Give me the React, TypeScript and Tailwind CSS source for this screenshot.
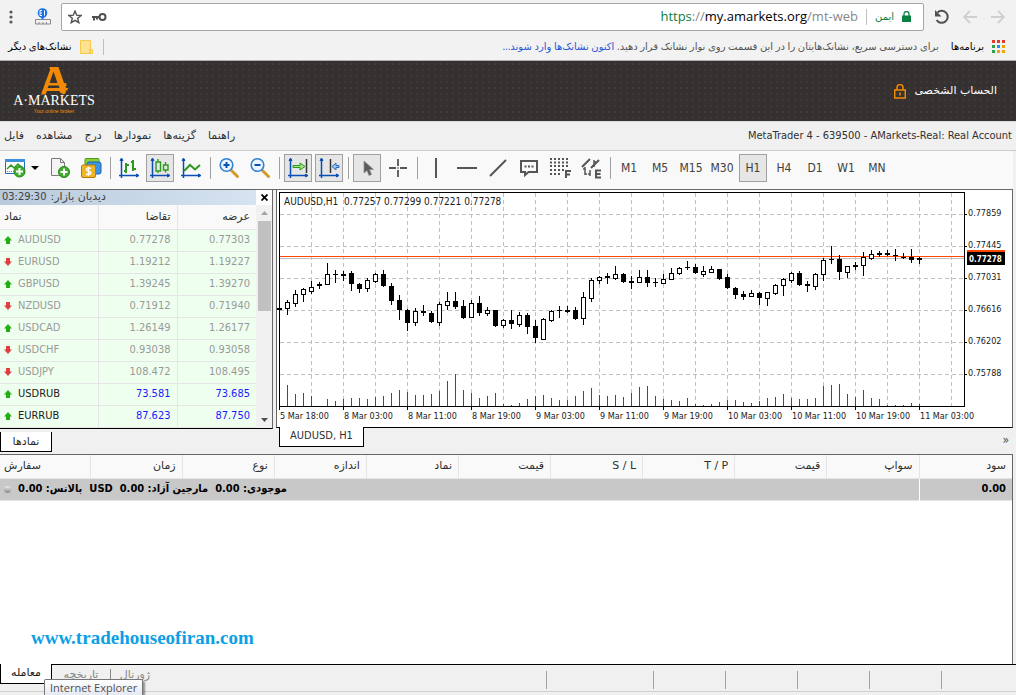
import type { ReactNode } from 'react';
import clsx from 'clsx';

type Candle = [high: number, top: number, bottom: number, low: number, hollow: 0 | 1];

const CANDLES: Candle[] = [
  [118, 118, 120, 120, 0], [110, 112, 118, 124, 1], [100, 104, 113, 116, 1], [98, 99, 104, 111, 1],
  [91, 97, 101, 103, 1], [92, 94, 96, 98, 0], [73, 84, 94, 94, 1], [80, 84, 85, 92, 0],
  [81, 84, 86, 90, 0], [81, 83, 94, 100, 0], [93, 94, 99, 102, 0], [88, 90, 98, 101, 1],
  [83, 84, 91, 92, 1], [80, 84, 96, 96, 0], [93, 96, 111, 114, 0], [105, 110, 120, 129, 0],
  [119, 120, 133, 140, 0], [118, 121, 132, 135, 1], [115, 121, 123, 125, 0], [121, 123, 132, 132, 0],
  [112, 114, 132, 135, 1], [102, 111, 115, 119, 1], [102, 111, 117, 118, 0], [110, 116, 128, 128, 0],
  [110, 113, 127, 127, 1], [106, 113, 123, 125, 0], [117, 120, 123, 125, 1], [120, 120, 136, 136, 0],
  [129, 130, 135, 137, 1], [120, 130, 134, 138, 0], [122, 125, 134, 136, 1], [123, 125, 137, 143, 0],
  [130, 136, 148, 152, 0], [128, 129, 149, 149, 1], [120, 121, 130, 131, 1], [116, 120, 121, 127, 0],
  [116, 120, 122, 122, 0], [117, 120, 129, 129, 0], [102, 107, 128, 134, 1], [88, 90, 108, 111, 1],
  [86, 87, 90, 93, 1], [83, 86, 88, 93, 0], [76, 84, 88, 89, 1], [83, 84, 92, 92, 0],
  [86, 91, 93, 98, 0], [80, 87, 92, 92, 1], [80, 87, 93, 96, 0], [88, 92, 93, 96, 0],
  [84, 89, 93, 93, 1], [78, 83, 89, 89, 1], [77, 78, 83, 84, 1], [71, 77, 78, 79, 0],
  [74, 77, 83, 83, 0], [76, 81, 84, 86, 1], [76, 79, 82, 82, 1], [79, 79, 89, 89, 0],
  [84, 87, 98, 98, 0], [97, 98, 105, 108, 0], [101, 104, 107, 109, 0], [100, 103, 106, 106, 1],
  [102, 103, 108, 114, 0], [102, 102, 108, 115, 1], [94, 95, 103, 104, 1], [88, 89, 95, 105, 1],
  [82, 83, 90, 92, 1], [81, 83, 95, 95, 0], [91, 94, 96, 101, 0], [83, 84, 96, 99, 1],
  [68, 70, 84, 90, 1], [56, 69, 70, 73, 0], [65, 69, 82, 89, 0], [76, 76, 82, 87, 1],
  [72, 75, 77, 79, 0], [62, 67, 75, 85, 1], [60, 64, 68, 69, 1], [61, 63, 65, 66, 0],
  [60, 63, 65, 65, 0], [59, 65, 66, 70, 0], [63, 67, 68, 68, 0], [59, 67, 70, 72, 0],
  [67, 68, 70, 73, 0],
];

const VOLUMES = [
  0, 21, 12, 13, 10, 0, 7, 5, 7, 8, 8, 7, 9, 10, 13, 16, 14, 11, 11, 12, 15, 25, 32, 16, 13, 8, 10,
  13, 2, 1, 3, 7, 10, 11, 8, 6, 6, 10, 15, 18, 11, 10, 11, 9, 13, 19, 20, 10, 7, 6, 5, 8, 2, 1, 2,
  4, 6, 6, 4, 3, 5, 8, 9, 12, 8, 7, 7, 8, 20, 21, 22, 12, 9, 16, 8, 7, 1, 1, 1, 3, 2,
];

const PRICES = ['0.77859', '0.77445', '0.77031', '0.76616', '0.76202', '0.75788'];

const TIMES = [
  '5 Mar 18:00', '8 Mar 03:00', '8 Mar 11:00', '8 Mar 19:00', '9 Mar 03:00', '9 Mar 11:00',
  '9 Mar 19:00', '10 Mar 03:00', '10 Mar 11:00', '10 Mar 19:00', '11 Mar 03:00',
];

const QUOTES = [
  { symbol: 'AUDUSD', bid: '0.77278', ask: '0.77303', up: true, live: false },
  { symbol: 'EURUSD', bid: '1.19212', ask: '1.19227', up: false, live: false },
  { symbol: 'GBPUSD', bid: '1.39245', ask: '1.39270', up: true, live: false },
  { symbol: 'NZDUSD', bid: '0.71912', ask: '0.71940', up: false, live: false },
  { symbol: 'USDCAD', bid: '1.26149', ask: '1.26177', up: true, live: false },
  { symbol: 'USDCHF', bid: '0.93038', ask: '0.93058', up: false, live: false },
  { symbol: 'USDJPY', bid: '108.472', ask: '108.495', up: false, live: false },
  { symbol: 'USDRUB', bid: '73.581', ask: '73.685', up: true, live: true },
  { symbol: 'EURRUB', bid: '87.623', ask: '87.750', up: true, live: true },
];

const MENU = ['فایل', 'مشاهده', 'درج', 'نمودارها', 'گزینه‌ها', 'راهنما'];
const TIMEFRAMES = ['M1', 'M5', 'M15', 'M30', 'H1', 'H4', 'D1', 'W1', 'MN'];
const ORDER_COLUMNS = ['سفارش', 'زمان', 'نوع', 'اندازه', 'نماد', 'قیمت', 'S / L', 'T / P', 'قیمت', 'سواپ', 'سود'];

// the condensed face is too narrow for Persian, so those labels use the regular one
const PERSIAN = "[font-family:'DejaVu_Sans',sans-serif]";

function Axes() {
  return (
    <g stroke="#0a4fb4" strokeWidth="1.5" fill="#0a4fb4">
      <path d="M2.5 3v17M0 17.5h18" fill="none" />
      <path d="M2.5 0l1.5 2.5h-3zM20 17.5l-2.5 1.5v-3z" strokeWidth="1" />
    </g>
  );
}

function Icon({ children }: { children: ReactNode }) {
  return (
    <svg width="20" height="20" viewBox="0 0 20 20" fill="none" aria-hidden="true" className="overflow-visible">
      {children}
    </svg>
  );
}

function PlusBadge({ x, y }: { x: number; y: number }) {
  return (
    <g>
      <circle cx={x} cy={y} r="5.5" fill="#3fae29" stroke="#23871a" />
      <path d={`M${x - 3.5} ${y}h7M${x} ${y - 3.5}v7`} stroke="#fff" strokeWidth="2" />
    </g>
  );
}

function ToolButton({ label, active, children }: { label: string; active?: boolean; children: ReactNode }) {
  return (
    <button
      type="button"
      aria-label={label}
      aria-pressed={active}
      className={clsx(
        'flex h-7 w-7 shrink-0 items-center justify-center text-xs text-[#404040]',
        active && 'border border-[#a0a0a0] bg-[#e6e6e6]',
      )}
    >
      {children}
    </button>
  );
}

function Separator() {
  return (
    <span className="flex w-1 shrink-0 justify-center">
      <span className="h-[22px] w-px bg-[#a0a0a0]" />
    </span>
  );
}

function BrowserBar() {
  return (
    <div className="border-b border-[#b0b0b0] bg-[#f2f2f2] [font-family:'Open_Sans','DejaVu_Sans',sans-serif]">
      <div className="flex h-[33px] items-center">
        <button type="button" aria-label="Menu" className="flex w-[22px] justify-center">
          <svg width="4" height="14" viewBox="0 0 4 14" fill="#5a5a5a">
            <circle cx="2" cy="2" r="1.6" />
            <circle cx="2" cy="7" r="1.6" />
            <circle cx="2" cy="12" r="1.6" />
          </svg>
        </button>
        <button type="button" aria-label="Extension" className="ml-3 w-[27px]">
          <svg width="18" height="18" viewBox="0 0 18 18" fill="none">
            <path d="M1.500 11.500h15v4.500h-15zM5 16v-2M9 16v-2M12.500 16v-2" stroke="#8a8a8a" />
            <path d="M6 8h5l-2.500 4z" fill="#1a73e8" />
            <circle cx="8.500" cy="5" r="4.800" fill="#1a73e8" />
            <path d="M8 2.500H6v5h2M6 5h2M10.500 2.500v5" stroke="#fff" />
          </svg>
        </button>
        <div className="flex h-7 flex-1 items-center rounded-xs border border-[#a6a6a6] bg-white px-1.5">
          <button type="button" aria-label="Bookmark">
            <svg width="14" height="14" viewBox="0 0 14 14" fill="none" stroke="#505050" strokeWidth="1.400">
              <path d="M7 1l1.700 4.200 4.400.3-3.400 2.800 1.100 4.400L7 10.300l-3.800 2.400 1.100-4.400L.9 5.500l4.400-.3z" />
            </svg>
          </button>
          <button type="button" aria-label="Saved password" className="ml-2.5">
            <svg width="15" height="10" viewBox="0 0 15 10" fill="none" stroke="#505050">
              <circle cx="10.500" cy="5" r="3" strokeWidth="2" />
              <path d="M0 5h7.500M2 5v3.500M5 5v2.500" strokeWidth="2" />
            </svg>
          </button>
          <span className="ml-auto text-[13px] text-[#888]">
            <span className="text-[#0b8043]">https</span>://<span className="text-black">my.amarkets.org</span>/mt-web
          </span>
          <span className="ml-2 h-4 w-px bg-[#c0c0c0]" />
          <span className="ml-2 text-[10px] text-[#0b8043]">ایمن</span>
          <svg className="mr-1.5 ml-2" width="9" height="11" viewBox="0 0 9 11" fill="none">
            <path d="M2 5V3a2.500 2.500 0 015 0v2" stroke="#0b8043" strokeWidth="1.300" />
            <path d="M0 4.500h9V11H0z" fill="#0b8043" />
          </svg>
        </div>
        <button type="button" aria-label="Reload" className="ml-2.5">
          <svg width="16" height="16" viewBox="0 0 16 16" fill="none">
            <path d="M3.500 3.500A6 6 0 112.600 11" stroke="#505050" strokeWidth="2" />
            <path d="M1 1v6.500h6.500z" fill="#505050" />
          </svg>
        </button>
        <button type="button" aria-label="Back" className="ml-3">
          <svg width="16" height="14" viewBox="0 0 16 14" fill="none" stroke="#d0d0d0" strokeWidth="1.800">
            <path d="M15 7H2M8 1L2 7l6 6" />
          </svg>
        </button>
        <button type="button" aria-label="Forward" className="mr-2.5 ml-3">
          <svg width="16" height="14" viewBox="0 0 16 14" fill="none" stroke="#d0d0d0" strokeWidth="1.800">
            <path d="M1 7h13M8 1l6 6-6 6" />
          </svg>
        </button>
      </div>

      <div dir="rtl" className="flex h-[27px] items-center pr-2.5 pl-2 text-[10px] whitespace-nowrap text-[#555]">
        <svg width="14" height="14" viewBox="0 0 14 14" className="shrink-0">
          <path d="M0 0h3v3H0zM5 0h3v3H5zM10 0h3v3h-3z" fill="#e33b2e" />
          <path d="M0 5h3v3H0zM0 10h3v3H0z" fill="#2e9e4f" />
          <path d="M5 5h3v3H5z" fill="#2a8be6" />
          <path d="M10 5h3v3h-3zM5 10h3v3H5zM10 10h3v3h-3z" fill="#f2a30c" />
        </svg>
        <a href="#apps" className="mr-2 text-black">برنامه‌ها</a>
        <span className="mr-3">
          برای دسترسی سریع، نشانک‌هایتان را در این قسمت روی نوار نشانک قرار دهید.{' '}
          <a href="#import" className="text-[#2a56d6]">اکنون نشانک‌ها وارد شوند...</a>
        </span>
        <span className="mr-auto h-4 w-px bg-[#c0c0c0]" />
        <svg width="13" height="14" viewBox="0 0 13 14" className="mr-2.5" fill="#fde293" stroke="#f5cc4a">
          <path d="M.5.5h10v13H.5zM9.500 9.500h3v4h-3z" />
        </svg>
        <a href="#other" className="mr-2 text-black">نشانک‌های دیگر</a>
      </div>
    </div>
  );
}

function SiteHeader() {
  return (
    <header className="flex h-[61px] items-center justify-between border-b border-[#dcdcdc] bg-[#353130] bg-[radial-gradient(#3f3a39_1px,transparent_1px)] bg-[length:6px_6px] pr-[19px] pl-3.5">
      <a href="#home" className="flex w-20 flex-col items-center">
        <svg width="27" height="28" viewBox="0 0 27 28" fill="#f28a05" aria-hidden="true">
          <path
            fillRule="evenodd"
            d="M8.500 0h9l5.500 16h2l.8 2.500-1.300.5.700 2H27l-.5 2.500h-2l.5 2-2 2-4-2-.5-1.500H6l-1.500 3.500H0L9 3zM12.500 4.500l-4 11.500h8zM7.500 18.500l-.8 2.500h11.800l-.8-2.500z"
          />
        </svg>
        <span className="text-sm leading-3 whitespace-nowrap text-white [font-family:'Liberation_Serif',serif]">
          A·MARKETS
        </span>
        <span className="text-[5px] leading-2 whitespace-nowrap text-[#f28a05] [font-family:'Liberation_Sans',sans-serif]">
          Your online broker
        </span>
      </a>
      <a href="#account" className="flex items-center gap-2 text-[11px] text-white">
        <svg width="12" height="15" viewBox="0 0 12 15" fill="none" stroke="#f28a05" strokeWidth="1.500">
          <path d="M3 6V3.500a3 3 0 016 0V6M.7 6h10.600v8H.7zM6 8.500v3" />
        </svg>
        <span dir="rtl" className={PERSIAN}>الحساب الشخصی</span>
      </a>
    </header>
  );
}

function MenuBar() {
  return (
    <div className="flex h-[29px] items-center justify-between border-b border-[#ccc] px-1 text-[11px] text-[#303030]">
      <nav className={clsx('flex gap-3', PERSIAN)}>
        {MENU.map((item) => (
          <button key={item} type="button">{item}</button>
        ))}
      </nav>
      <span>MetaTrader 4 - 639500 - AMarkets-Real: Real Account</span>
    </div>
  );
}

function Toolbar() {
  return (
    <div className="flex h-[38px] items-center gap-[3px] overflow-hidden bg-[#f9f9f9] px-[5px] pb-1">
      <button type="button" aria-label="New chart" className="flex w-[38px] shrink-0 items-center gap-1.5">
        <Icon>
          <path d="M.5 1.500h19v14H.5z" fill="#fff" stroke="#1f6fc0" />
          <path d="M0 1h20v3H0z" fill="#3c8ede" />
          <path d="M2 11l4-4 3 3 4-4 5 5" stroke="#2c9a1f" strokeWidth="1.500" />
          <path d="M2 13.500h12" stroke="#5a90d0" strokeDasharray="1 1" />
          <PlusBadge x={14.5} y={13.5} />
        </Icon>
        <svg width="8" height="4" viewBox="0 0 8 4" className="shrink-0"><path d="M0 0h8L4 4z" fill="#000" /></svg>
      </button>
      <ToolButton label="New order">
        <Icon>
          <path d="M1.500.5h9l4 4v13h-13z" fill="#f4f4f4" stroke="#7a7a7a" />
          <path d="M10.500.5v4h4" stroke="#7a7a7a" />
          <PlusBadge x={14} y={14} />
        </Icon>
      </ToolButton>
      <ToolButton label="Account history">
        <Icon>
          <rect x="4" y=".5" width="14" height="8" rx="1" fill="#8ccf3a" stroke="#4c9a1c" />
          <rect x="6" y="4" width="14" height="12" rx="2" fill="#3b94e4" stroke="#1d62ae" />
          <rect x=".5" y="7" width="14" height="12.500" rx="1.500" fill="#f0b429" stroke="#b87a08" />
          <path d="M10 10.500C9 9.500 5.300 9.500 5.300 11.500S10 13 10 15s-4 2-5 .7M7.500 8.800v9" stroke="#fff" strokeWidth="1.400" />
        </Icon>
      </ToolButton>
      <Separator />
      <ToolButton label="Bar chart">
        <Icon>
          <Axes />
          <path d="M7 5v10M5 13h2M7 7h3M14 2v11M12 4h2M14 11h3" stroke="#2c9a1f" strokeWidth="2" />
        </Icon>
      </ToolButton>
      <ToolButton label="Candlesticks" active>
        <Icon>
          <Axes />
          <path d="M8 1v3M8 13v2M6 4h4.500v9H6zM15.500 4v3M15.500 12v2.500M13.500 7H18v5h-4.500z" stroke="#2c9a1f" strokeWidth="1.400" />
        </Icon>
      </ToolButton>
      <ToolButton label="Line chart">
        <Icon>
          <Axes />
          <path d="M3 13l6-6 5 4.500 5-4.500" stroke="#2c9a1f" strokeWidth="2" />
        </Icon>
      </ToolButton>
      <Separator />
      {['Zoom in', 'Zoom out'].map((label) => (
        <ToolButton key={label} label={label}>
          <Icon>
            <path d="M12.500 12.500l6 6" stroke="#d49a2b" strokeWidth="3" strokeLinecap="round" />
            <circle cx="7.500" cy="7" r="6.300" fill="#eaf5ff" stroke="#2f83cf" strokeWidth="1.600" />
            <path d={label === 'Zoom in' ? 'M4.500 7h6M7.500 4v6' : 'M4.500 7h6'} stroke="#0a4fb4" strokeWidth="2" />
          </Icon>
        </ToolButton>
      ))}
      <Separator />
      <ToolButton label="Auto scroll" active>
        <Icon>
          <Axes />
          <path d="M18.500 1v14" stroke="#333" strokeWidth="1.500" />
          <path d="M5 7.500h7V5l5 3.500-5 3.500V9.500H5z" fill="#a6e287" stroke="#2c9a1f" />
        </Icon>
      </ToolButton>
      <ToolButton label="Chart shift" active>
        <Icon>
          <Axes />
          <path d="M11.500 1v14" stroke="#333" strokeWidth="1.500" />
          <path d="M20 7.500h-3V5l-4 3.500 4 3.500V9.500h3z" fill="#9cc8f5" stroke="#2468c0" />
        </Icon>
      </ToolButton>
      <Separator />
      <ToolButton label="Cursor" active>
        <Icon>
          <path d="M7 3v12l3-2.500 2 5 2.500-1-2-5h4z" fill="#5c5c5c" stroke="#8c8c8c" strokeWidth=".7" />
        </Icon>
      </ToolButton>
      <ToolButton label="Crosshair">
        <Icon>
          <path d="M1 10h7M12 10h7M10 1v7M10 12v7M9.500 10h1" stroke="#555" strokeWidth="1.800" />
        </Icon>
      </ToolButton>
      <Separator />
      <ToolButton label="Vertical line">
        <Icon><path d="M10 0v20" stroke="#555" strokeWidth="2" /></Icon>
      </ToolButton>
      <ToolButton label="Horizontal line">
        <Icon><path d="M0 10h20" stroke="#555" strokeWidth="2" /></Icon>
      </ToolButton>
      <ToolButton label="Trendline">
        <Icon><path d="M2 18L18 2" stroke="#555" strokeWidth="2" /></Icon>
      </ToolButton>
      <ToolButton label="Text">
        <Icon>
          <path d="M2 3h16v11H9.500L6 17v-3H2z" stroke="#555" strokeWidth="2" />
          <path d="M5.500 8.500h2M9 8.500h2M12.500 8.500h2" stroke="#555" strokeWidth="2" />
        </Icon>
      </ToolButton>
      <ToolButton label="Fibonacci">
        <Icon>
          <path d="M0 1h19M0 4.500h19M0 8h19M0 12h19M0 16h12" stroke="#555" strokeWidth="2" strokeDasharray="2 2" />
          <path d="M14 10h6v10h-6z" fill="#f9f9f9" />
          <path d="M16 20v-7h5M16 16.500h4" stroke="#555" strokeWidth="2" />
        </Icon>
      </ToolButton>
      <ToolButton label="Equidistant channel">
        <Icon>
          <path d="M1 9l8-8M10 10l8-8" stroke="#555" strokeWidth="2" />
          <path d="M4 9v8M2 11h2M4 16h2M9 12v6M7 16h2M13 2v7M11 8h2M13 4h2" stroke="#555" strokeWidth="1.500" />
          <path d="M20 12.500h-5v7h5M15 16h4.500" stroke="#555" strokeWidth="2" />
        </Icon>
      </ToolButton>
      <Separator />
      {TIMEFRAMES.map((frame) => (
        <ToolButton key={frame} label={frame} active={frame === 'H1'}>{frame}</ToolButton>
      ))}
    </div>
  );
}

function MarketWatch() {
  return (
    <section className="flex w-[273px] shrink-0 flex-col">
      <div className="flex-1 border-r border-b border-r-[#666] border-b-black bg-[#f9f9f9]">
        <div className="flex h-[15px] items-center bg-white">
          <h2 className="flex h-full flex-1 items-center bg-linear-to-r from-[#b8cadc] to-[#d6e3f1] pl-0.5 text-[11px] text-[#404040]">
            03:29:30<span dir="rtl" className={clsx('pl-1', PERSIAN)}>دیدبان بازار:</span>
          </h2>
          <button type="button" aria-label="Close" className="flex w-4 justify-center">
            <svg width="7" height="7" viewBox="0 0 7 7" stroke="#000" strokeWidth="1.800"><path d="M.5.5l6 6M6.500.5l-6 6" /></svg>
          </button>
        </div>
        <div className="flex">
          <table className="flex-1 table-fixed border-collapse text-[11px]">
            <thead>
              <tr className={clsx('h-6 border-b border-[#e5e5e5] text-[#303030]', PERSIAN)}>
                <th className="w-[98px] border-r border-[#e5e5e5] pl-1 text-left font-normal">نماد</th>
                <th className="w-[79px] border-r border-[#e5e5e5] pr-1.5 text-right font-normal">تقاضا</th>
                <th className="pr-1.5 text-right font-normal">عرضه</th>
              </tr>
            </thead>
            <tbody>
              {QUOTES.map((q) => (
                <tr
                  key={q.symbol}
                  className={clsx('h-[22px] border-b border-[#e5e5e5] bg-[#efffef]', q.live ? 'text-[#1a1aff]' : 'text-[#999]')}
                >
                  <td className={clsx('border-r border-[#e5e5e5] pl-1', q.live && 'text-[#202020]')}>
                    <span className="flex items-center gap-1.5">
                      <svg width="8" height="8" viewBox="0 0 8 8">
                        {q.up ? (
                          <path d="M4 0l4 4.500H6V8H2V4.500H0z" fill="#23b014" />
                        ) : (
                          <path d="M4 8l4-4.500H6V0H2v3.500H0z" fill="#e04040" />
                        )}
                      </svg>
                      {q.symbol}
                    </span>
                  </td>
                  <td className="border-r border-[#e5e5e5] pr-1.5 text-right">{q.bid}</td>
                  <td className="pr-1.5 text-right">{q.ask}</td>
                </tr>
              ))}
            </tbody>
          </table>
          <div className="flex w-4 flex-col items-center bg-[#f1f1f1] py-1.5">
            <svg width="7" height="4" viewBox="0 0 7 4"><path d="M0 4h7L3.500 0z" fill="#a3a3a3" /></svg>
            <span className="mt-1.5 h-[90px] w-[13px] bg-[#c1c1c1]" />
            <svg className="mt-auto" width="7" height="4" viewBox="0 0 7 4"><path d="M0 0h7L3.500 4z" fill="#505050" /></svg>
          </div>
        </div>
      </div>
      <div className="-mt-px h-[26px]">
        <button type="button" className={clsx('h-5 w-[52px] border border-t-0 border-black bg-white text-[11px] text-[#303030]', PERSIAN)}>
          نمادها
        </button>
      </div>
    </section>
  );
}

function PriceChart() {
  return (
    <svg viewBox="0 0 735 237" className="block w-full" role="img" aria-label="AUDUSD, H1">
      <g shapeRendering="crispEdges" strokeWidth="1">
        <g stroke="#c0c0c0" strokeDasharray="4 3">
          {PRICES.map((price, i) => (
            <path key={price} d={`M3 ${24.5 + i * 32}H687`} />
          ))}
          {Array.from({ length: 21 }, (_, i) => (
            <path key={i} d={`M${34.5 + i * 32} 3V216`} />
          ))}
        </g>
        <rect x="3" y="68" width="684" height="1" fill="#c0c0c0" />
        <rect x="3" y="66" width="684" height="1" fill="#ff4500" />
        {VOLUMES.map((v, i) => v > 0 && <rect key={i} x={2 + i * 8} y={216 - v} width="1" height={v} fill="#008000" />)}
        {CANDLES.map(([high, top, bottom, low, hollow], i) => {
          const x = 2 + i * 8;
          return (
            <g key={i}>
              <rect x={x} y={high} width="1" height={low - high + 1} fill="#000" />
              {hollow ? (
                <rect x={x - 1.5} y={top + 0.5} width="4" height={bottom - top} fill="#fff" stroke="#000" />
              ) : (
                <rect x={x - 2} y={top} width="5" height={bottom - top} fill="#000" />
              )}
            </g>
          );
        })}
        <path d="M2.500 220V2.500H687.500V216.500H2" fill="none" stroke="#000" />
        {TIMES.map((time, i) => (
          <path key={time} d={`M${2.5 + i * 64} 216v4`} stroke="#000" />
        ))}
        {PRICES.map((price, i) => (
          <path key={price} d={`M687 ${24.5 + i * 32}h3`} stroke="#000" />
        ))}
      </g>
      <g fontSize="9" fill="#202020">
        {TIMES.map((time, i) => (
          <text key={time} x={3 + i * 64} y="229">{time}</text>
        ))}
        {PRICES.map((price, i) => (
          <text key={price} x="691" y={26 + i * 32}>{price}</text>
        ))}
      </g>
      <path d="M690 60h38v4h-38z" fill="#ff4500" />
      <path d="M690 62h38v13h-38z" fill="#000" />
      <text x="692" y="72" fontSize="8" fontWeight="bold" fill="#fff">0.77278</text>
      <g fontSize="10" fill="#202020">
        <text x="7" y="15">AUDUSD,H1</text>
        <text x="67" y="15">0.77257 0.77299 0.77221 0.77278</text>
      </g>
    </svg>
  );
}

function ChartPanel() {
  return (
    <section className="flex min-w-0 flex-1 flex-col">
      <div className="border-x border-b border-x-[#666] border-b-black bg-white">
        <PriceChart />
      </div>
      <div className="-mt-px flex h-[26px] justify-between pr-1 pl-[3px]">
        <button type="button" className="h-5 w-[85px] border border-t-0 border-black bg-white text-[11px] text-[#303030]">
          AUDUSD, H1
        </button>
        <button type="button" aria-label="More tabs" className="text-xs text-[#505050]">»</button>
      </div>
    </section>
  );
}

function Terminal() {
  return (
    <section className="flex flex-1 flex-col border-t border-r border-[#666] bg-white">
      <table className="w-full table-fixed border-collapse text-[11px] text-black">
        <thead>
          <tr className={clsx('h-6 border-b border-[#e5e5e5] bg-[#f9f9f9] text-[#303030]', PERSIAN)}>
            {ORDER_COLUMNS.map((column, i) => (
              <th
                key={i}
                className={clsx(
                  'border-[#e5e5e5] font-normal',
                  i === 0 ? 'w-[90px] pl-1 text-left' : 'pr-1.5 text-right',
                  i < ORDER_COLUMNS.length - 1 ? 'border-r' : 'w-[93px]',
                )}
              >
                {column}
              </th>
            ))}
          </tr>
        </thead>
        <tbody>
          <tr className="h-[22px] border-b border-[#e5e5e5] bg-[#c8c8c8] font-bold">
            <td colSpan={10} className="border-r border-white pl-1">
              <span className="flex items-center gap-[7px] whitespace-nowrap">
                <span className="h-[7px] w-[7px] rounded-full bg-linear-to-b from-[#eee] to-[#888]" />
                <span dir="rtl">بالانس: 0.00</span>
                <span>USD</span>
                <span dir="rtl">مارجین آزاد: 0.00</span>
                <span dir="rtl">موجودی: 0.00</span>
              </span>
            </td>
            <td className="pr-1.5 text-right">0.00</td>
          </tr>
        </tbody>
      </table>
      <a
        href="#tradehouse"
        className="mt-auto pb-3 pl-[31px] text-[19px] font-bold text-[#0c9fe6] [font-family:'Liberation_Serif',serif]"
      >
        www.tradehouseofiran.com
      </a>
    </section>
  );
}

function StatusBar() {
  return (
    <footer className={clsx('relative flex h-[31px] border-t border-black text-[11px] text-[#888]', PERSIAN)}>
      <button type="button" className="-mt-px h-5 w-[52px] border border-t-0 border-black bg-white text-[#202020]">
        معامله
      </button>
      <button type="button" className="h-5 w-[58px]">تاریخچه</button>
      <span className="mt-1 h-4 w-px bg-[#888]" />
      <button type="button" className="h-5 w-12">ژورنال</button>
      <span className="mt-1.5 ml-auto flex h-[18px]">
        <span className="w-[107px] border-l border-[#a0a0a0]" />
        {[1, 2, 3, 4].map((n) => (
          <span key={n} className="w-[72px] border-l border-[#a0a0a0]" />
        ))}
        <span className="w-[75px] border-l border-[#a0a0a0]" />
      </span>
      <span className="absolute inset-x-0 bottom-[3px] border-t border-[#d0d0d0]" />
      <span
        role="tooltip"
        className="absolute bottom-0 left-11 rounded-t-xs border border-b-0 border-[#767676] bg-linear-to-b from-white to-[#e6e8f2] px-[5px] text-[11px] leading-[15px] whitespace-nowrap text-[#505050] shadow-[2px_2px_2px_rgba(0,0,0,0.4)] [font-family:'Open_Sans',sans-serif]"
      >
        Internet Explorer
      </span>
    </footer>
  );
}

export default function App() {
  return (
    <div className="flex min-h-screen flex-col bg-[#f0f0f0] [font-family:'DejaVu_Sans_Condensed','Noto_Sans','DejaVu_Sans',sans-serif]">
      <BrowserBar />
      <SiteHeader />
      <MenuBar />
      <main className="flex flex-1 flex-col pr-[3px]">
        <Toolbar />
        <div className="flex gap-[3px] border-t border-[#666]">
          <MarketWatch />
          <ChartPanel />
        </div>
        <Terminal />
      </main>
      <StatusBar />
    </div>
  );
}
